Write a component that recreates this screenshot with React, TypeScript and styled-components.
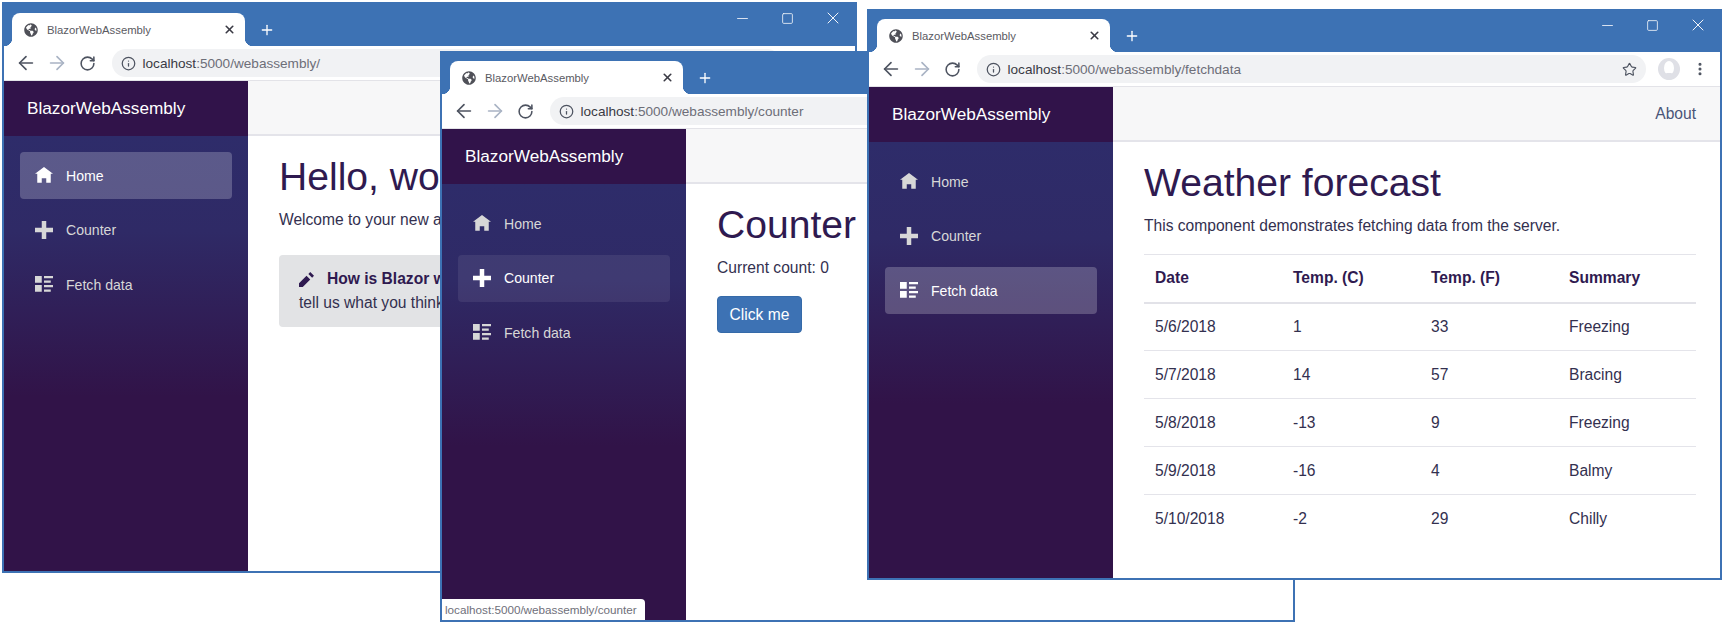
import React from "react";
import styled, { createGlobalStyle } from "styled-components";
import { ArrowLeft, ArrowRight, RotateCw, Info, Star, EllipsisVertical, X, Plus, Minus, Square } from "lucide-react";
import { FaGlobeAmericas } from "react-icons/fa";

const GlobalStyle = createGlobalStyle`
  html, body { margin: 0; padding: 0; background: #fff; }
  body { font-family: "Liberation Sans", Arial, sans-serif; }
  * { box-sizing: border-box; }
`;

const BLUE = "#3d72b4";
const INK = "#2f1a50";

const Desktop = styled.div`
  position: relative;
  width: 1725px;
  height: 625px;
  overflow: hidden;
`;

const Frame = styled.section<{ $left: number; $top: number; $height: number }>`
  position: absolute;
  left: ${(p) => p.$left}px;
  top: ${(p) => p.$top}px;
  width: 855px;
  height: ${(p) => p.$height}px;
  display: flex;
  flex-direction: column;
  border: 2px solid ${BLUE};
  background: #fff;
  overflow: hidden;
`;

const TabStrip = styled.div<{ $height: number }>`
  flex: 0 0 ${(p) => p.$height}px;
  display: flex;
  align-items: flex-end;
  background: ${BLUE};
  padding-left: 8px;
  color: #fff;
`;

const Tab = styled.div`
  position: relative;
  width: 233px;
  height: 33px;
  display: flex;
  align-items: center;
  padding: 0 9px 0 12px;
  background: #fff;
  border-radius: 8px 8px 0 0;
  color: #5a5a62;
  font-size: 11.3px;

  &::before,
  &::after {
    content: "";
    position: absolute;
    bottom: 0;
    width: 8px;
    height: 8px;
  }
  &::before {
    left: -8px;
    background: radial-gradient(circle at 0 0, transparent 8px, #fff 8.5px);
  }
  &::after {
    right: -8px;
    background: radial-gradient(circle at 100% 0, transparent 8px, #fff 8.5px);
  }
`;

const TabTitle = styled.span`
  flex: 1;
  margin-left: 9px;
  white-space: nowrap;
`;

const NewTab = styled.div`
  width: 44px;
  height: 33px;
  display: flex;
  align-items: center;
  justify-content: center;
`;

const Controls = styled.div`
  margin-left: auto;
  align-self: flex-start;
  display: flex;
`;

const Control = styled.div`
  width: 45px;
  height: 28px;
  display: flex;
  align-items: center;
  justify-content: center;
  color: #f4f6fa;
`;

const Toolbar = styled.div`
  flex: 0 0 35px;
  display: flex;
  align-items: center;
  padding: 0 5px 0 6px;
  background: #fff;
  border-bottom: 1px solid #e3e3e8;
`;

const ToolButton = styled.div<{ $muted?: boolean }>`
  flex: 0 0 31px;
  height: 28px;
  display: flex;
  align-items: center;
  justify-content: center;
  color: ${(p) => (p.$muted ? "#a9b3c4" : "#4d5360")};
`;

const UrlPill = styled.div`
  flex: 1;
  height: 28px;
  margin: 0 7px 0 9px;
  display: flex;
  align-items: center;
  padding: 0 9px;
  background: #f1f2f4;
  border-radius: 14px;
  color: #6d6e78;
  font-size: 13.6px;
  white-space: nowrap;
`;

const UrlText = styled.span`
  flex: 1;
  margin-left: 6.5px;
  b {
    font-weight: 400;
    color: #3a3a44;
  }
`;

const Body = styled.div`
  flex: 1;
  min-height: 0;
  display: flex;
`;

const Sidebar = styled.aside`
  flex: 0 0 244px;
  display: flex;
  flex-direction: column;
`;

const Brand = styled.div`
  flex: 0 0 55px;
  display: flex;
  align-items: center;
  padding-left: 23px;
  background: #31134a;
  color: #fff;
  font-size: 17.2px;
`;

const Nav = styled.nav`
  flex: 1;
  display: flex;
  flex-direction: column;
  gap: 7.5px;
  padding: 16px 16px 0;
  background: linear-gradient(180deg, #2e2c6a 0%, #2f2a66 22%, #311348 60%, #311348 100%);
`;

const NavItem = styled.div<{ $state?: "active" | "hover" }>`
  height: 47px;
  display: flex;
  align-items: center;
  gap: 13px;
  padding-left: 15px;
  border-radius: 4px;
  font-size: 14.1px;
  color: ${(p) => (p.$state ? "#fff" : "#d7d7d7")};
  background: ${(p) =>
    p.$state === "active" ? "rgba(255,255,255,0.22)" : p.$state === "hover" ? "rgba(255,255,255,0.08)" : "transparent"};
`;

const OpenIcon = styled.svg`
  width: 18px;
  height: 18px;
  flex: none;
  fill: currentColor;
`;

const Main = styled.main`
  flex: 1;
  min-width: 0;
  display: flex;
  flex-direction: column;
  color: #33304f;
  font-size: 15.6px;
`;

const TopRow = styled.div`
  flex: 0 0 55px;
  display: flex;
  align-items: center;
  justify-content: flex-end;
  padding-right: 24px;
  background: #f7f7f8;
  border-bottom: 2px solid #e4e4ea;
  color: #4a5578;
`;

const Content = styled.div`
  flex: 1;
  padding: 17px 24px 0 31px;
`;

const Title = styled.h1`
  margin: 0 0 7px;
  font-size: 39.1px;
  font-weight: 400;
  line-height: 48px;
  color: ${INK};
  white-space: nowrap;
`;

const Para = styled.p`
  margin: 0 0 16px;
  line-height: 24px;
  white-space: nowrap;
`;

const Alert = styled.div`
  margin-top: 23px;
  padding: 12px 20px;
  background: #e2e3e5;
  border-radius: 4px;
  line-height: 24px;
  white-space: nowrap;
`;

const AlertHead = styled.div`
  display: flex;
  align-items: center;
  gap: 13px;
  color: ${INK};
  font-weight: 700;
`;

const PencilIcon = styled.svg`
  width: 15px;
  height: 15px;
  fill: currentColor;
`;

const Primary = styled.button`
  display: block;
  width: 85px;
  height: 37px;
  margin-top: 1px;
  padding: 0;
  border: 1px solid #356aa8;
  border-radius: 4px;
  background: ${BLUE};
  color: #fff;
  font: inherit;
`;

const Table = styled.table`
  width: 100%;
  table-layout: fixed;
  border-collapse: collapse;
  line-height: 24px;
`;

const Th = styled.th`
  height: 48px;
  padding: 0 11px;
  text-align: left;
  color: ${INK};
  border-top: 1px solid #e4e4ea;
  border-bottom: 2px solid #e2e2e8;
`;

const Td = styled.td`
  height: 48px;
  padding: 0 11px;
  border-bottom: 1px solid #e4e4ea;
`;

const LastRow = styled.tr`
  td {
    border-bottom: 0;
  }
`;

const Status = styled.div`
  position: absolute;
  left: 0;
  bottom: 0;
  width: 203px;
  height: 21px;
  display: flex;
  align-items: center;
  padding-left: 3px;
  background: #fff;
  border-top-right-radius: 4px;
  color: #6f6f7a;
  font-size: 11.7px;
  white-space: nowrap;
`;

const Avatar = styled.svg`
  width: 22px;
  height: 22px;
`;

const icons = {
  home: "M4 0l-4 3h1v4h2v-2h2v2h2v-4.03l1 .03-4-3z",
  plus: "M3 0v3h-3v2h3v3h2v-3h3v-2h-3v-3h-2z",
  list: "M0 0v3h3v-3h-3zm4 0v1h4v-1h-4zm0 2v1h3v-1h-3zm-4 2v3h3v-3h-3zm4 0v1h4v-1h-4zm0 2v1h3v-1h-3z",
};

type NavState = { item: "Home" | "Counter" | "Fetch data"; state: "active" | "hover" };

const navItems = [
  { label: "Home", icon: icons.home },
  { label: "Counter", icon: icons.plus },
  { label: "Fetch data", icon: icons.list },
];

type WindowProps = {
  left: number;
  top: number;
  height: number;
  stripHeight?: number;
  path: string;
  nav: NavState;
  about?: boolean;
  status?: string;
  children: React.ReactNode;
};

const BrowserWindow = ({ left, top, height, stripHeight = 41, path, nav, about, status, children }: WindowProps) => (
  <Frame $left={left} $top={top} $height={height}>
    <TabStrip $height={stripHeight}>
      <Tab>
        <FaGlobeAmericas size={14} color="#4f5058" />
        <TabTitle>BlazorWebAssembly</TabTitle>
        <X size={13} strokeWidth={3} color="#3a3a44" />
      </Tab>
      <NewTab>
        <Plus size={16} strokeWidth={2} />
      </NewTab>
      <Controls>
        <Control>
          <Minus size={17} strokeWidth={1.2} />
        </Control>
        <Control>
          <Square size={13} strokeWidth={1.5} />
        </Control>
        <Control>
          <X size={20} strokeWidth={1.2} />
        </Control>
      </Controls>
    </TabStrip>
    <Toolbar>
      <ToolButton>
        <ArrowLeft size={22} strokeWidth={1.8} />
      </ToolButton>
      <ToolButton $muted>
        <ArrowRight size={22} strokeWidth={1.8} />
      </ToolButton>
      <ToolButton>
        <RotateCw size={17} strokeWidth={2.2} />
      </ToolButton>
      <UrlPill>
        <Info size={15} strokeWidth={2} color="#4d5360" />
        <UrlText>
          <b>localhost</b>:5000/webassembly/{path}
        </UrlText>
        <Star size={15} strokeWidth={1.8} color="#4d5360" />
      </UrlPill>
      <ToolButton>
        <Avatar viewBox="0 0 22 22">
          <circle cx="11" cy="11" r="11" fill="#dfe0e6" />
          <ellipse cx="11" cy="10" rx="5" ry="7" fill="#fff" />
          <path d="M4 18c2-3 5-3 7-3s5 0 7 3c-2 2-4 4-7 4s-5-2-7-4z" fill="#dfe0e6" />
        </Avatar>
      </ToolButton>
      <ToolButton>
        <EllipsisVertical size={16} strokeWidth={2.6} />
      </ToolButton>
    </Toolbar>
    <Body>
      <Sidebar>
        <Brand>BlazorWebAssembly</Brand>
        <Nav>
          {navItems.map((n) => (
            <NavItem key={n.label} $state={n.label === nav.item ? nav.state : undefined}>
              <OpenIcon viewBox="0 0 8 8">
                <path d={n.icon} />
              </OpenIcon>
              {n.label}
            </NavItem>
          ))}
        </Nav>
      </Sidebar>
      <Main>
        <TopRow>{about && "About"}</TopRow>
        <Content>{children}</Content>
      </Main>
    </Body>
    {status && <Status>{status}</Status>}
  </Frame>
);

const forecasts = [
  ["5/6/2018", "1", "33", "Freezing"],
  ["5/7/2018", "14", "57", "Bracing"],
  ["5/8/2018", "-13", "9", "Freezing"],
  ["5/9/2018", "-16", "4", "Balmy"],
  ["5/10/2018", "-2", "29", "Chilly"],
];

const App = () => {
  return (
    <Desktop>
      <GlobalStyle />
      <BrowserWindow left={2} top={2} height={571} stripHeight={42} path="" nav={{ item: "Home", state: "active" }}>
        <Title>Hello, world!</Title>
        <Para>Welcome to your new app.</Para>
        <Alert>
          <AlertHead>
            <PencilIcon viewBox="0 0 8 8">
              <path d="M6 0l-1 1 2 2 1-1-2-2zm-2 2l-4 4v2h2l4-4-2-2z" />
            </PencilIcon>
            How is Blazor working for you?
          </AlertHead>
          tell us what you think.
        </Alert>
      </BrowserWindow>
      <BrowserWindow
        left={440}
        top={51}
        height={571}
        path="counter"
        nav={{ item: "Counter", state: "hover" }}
        status="localhost:5000/webassembly/counter"
      >
        <Title>Counter</Title>
        <Para>Current count: 0</Para>
        <Primary>Click me</Primary>
      </BrowserWindow>
      <BrowserWindow left={867} top={9} height={571} path="fetchdata" nav={{ item: "Fetch data", state: "active" }} about>
        <Title>Weather forecast</Title>
        <Para>This component demonstrates fetching data from the server.</Para>
        <Table>
          <thead>
            <tr>
              <Th>Date</Th>
              <Th>Temp. (C)</Th>
              <Th>Temp. (F)</Th>
              <Th>Summary</Th>
            </tr>
          </thead>
          <tbody>
            {forecasts.map((row, i) => {
              const cells = row.map((c) => <Td key={c}>{c}</Td>);
              return i === forecasts.length - 1 ? <LastRow key={row[0]}>{cells}</LastRow> : <tr key={row[0]}>{cells}</tr>;
            })}
          </tbody>
        </Table>
      </BrowserWindow>
    </Desktop>
  );
};

export default App;
